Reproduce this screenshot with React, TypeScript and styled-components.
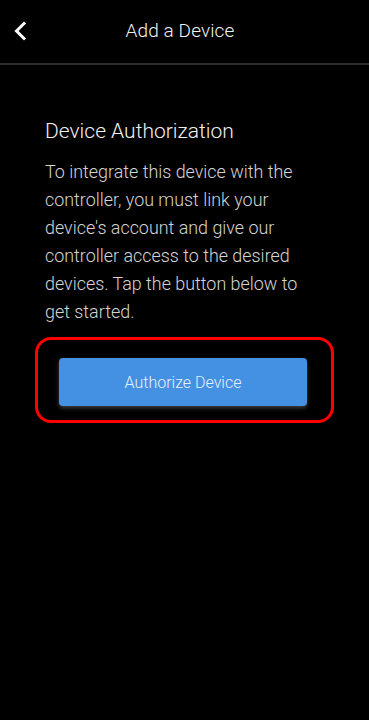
import React from 'react';
import styled, { createGlobalStyle } from 'styled-components';

const GlobalStyle = createGlobalStyle`
  html, body {
    margin: 0;
    padding: 0;
    background: #000;
  }
  body {
    font-family: "Roboto Light", Roboto, "Liberation Sans", sans-serif;
  }
`;

const Screen = styled.div`
  width: 369px;
  height: 720px;
  background: #000;
  display: flex;
  flex-direction: column;
`;

const Header = styled.header`
  height: 63px;
  border-bottom: 2px solid #2e2e2e;
  display: grid;
  grid-template-columns: 56px 1fr 65px;
  align-items: center;
`;

const BackButton = styled.button`
  background: none;
  border: 0;
  padding: 0 0 1px 13px;
  display: flex;
  align-items: center;
  cursor: pointer;
`;

const Title = styled.h1`
  margin: 0 0 3px;
  text-align: center;
  font-size: 19px;
  font-weight: 300;
  color: #f2f2f2;
  letter-spacing: 0.1px;
`;

const Content = styled.main`
  padding: 52px 30px 0 45px;
  display: flex;
  flex-direction: column;
`;

const Heading = styled.h2`
  margin: 0;
  font-size: 21px;
  font-weight: 300;
  color: #f0f0f0;
  line-height: 28px;
`;

const Body = styled.p`
  margin: 13px 0 0;
  width: 260px;
  font-size: 17.9px;
  font-weight: 300;
  line-height: 28px;
  color: #d4d4d4;
`;

const Highlight = styled.div`
  margin: 11px 0 0 -10px;
  width: 299px;
  height: 86px;
  box-sizing: border-box;
  border: 3px solid #ff0000;
  border-radius: 16px;
  display: flex;
  align-items: center;
  justify-content: center;
`;

const PrimaryButton = styled.button`
  width: 248px;
  height: 48px;
  margin: 4px 3px 0 0;
  border: 0;
  border-radius: 4px;
  background: #4490e2;
  color: #e6f0fb;
  font-family: "Roboto Light", Roboto, "Liberation Sans", sans-serif;
  font-size: 16px;
  font-weight: 300;
  box-shadow: 0 2px 4px rgba(90, 90, 90, 0.7);
  cursor: pointer;
`;

const Chevron = () => (
  <svg width="14" height="20" viewBox="0 0 14 20">
    <path d="M11 2.5 L3.5 10 L11 17.5" fill="none" stroke="#fff" strokeWidth="3" strokeLinecap="square" />
  </svg>
);

export default function App() {
  return (
    <>
      <GlobalStyle />
      <Screen>
        <Header>
          <BackButton aria-label="Back">
            <Chevron />
          </BackButton>
          <Title>Add a Device</Title>
          <span />
        </Header>
        <Content>
          <Heading>Device Authorization</Heading>
          <Body>
            To integrate this device with the controller, you must link your device's account and give our
            controller access to the desired devices. Tap the button below to get started.
          </Body>
          <Highlight>
            <PrimaryButton>Authorize Device</PrimaryButton>
          </Highlight>
        </Content>
      </Screen>
    </>
  );
}
